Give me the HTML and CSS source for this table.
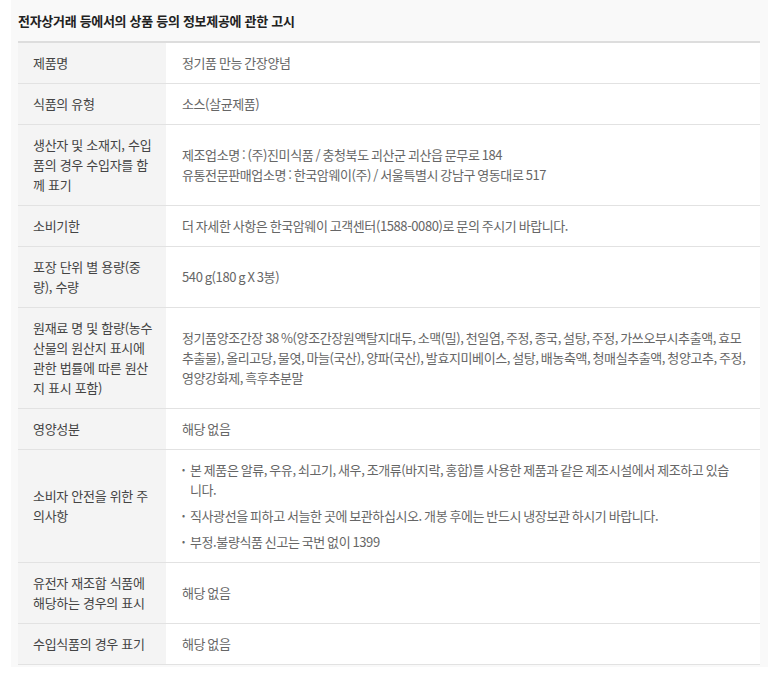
FILE: index.html
```html
<!DOCTYPE html>
<html lang="ko">
<head>
<meta charset="utf-8">
<title>상품정보제공 고시</title>
<link rel="stylesheet" href="styles.css">
</head>
<body>
<div class="panel">
  <h2 class="title">전자상거래 등에서의 상품 등의 정보제공에 관한 고시</h2>
  <table class="info">
    <tbody>
      <tr><th>제품명</th><td>정기품 만능 간장양념</td></tr>
      <tr><th>식품의 유형</th><td>소스(살균제품)</td></tr>
      <tr><th>생산자 및 소재지, 수입품의 경우 수입자를 함께 표기</th><td>제조업소명 : (주)진미식품 / 충청북도 괴산군 괴산읍 문무로 184<br>유통전문판매업소명 : 한국암웨이(주) / 서울특별시 강남구 영동대로 517</td></tr>
      <tr><th>소비기한</th><td>더 자세한 사항은 한국암웨이 고객센터(1588-0080)로 문의 주시기 바랍니다.</td></tr>
      <tr><th>포장 단위 별 용량(중량), 수량</th><td>540 g(180 g X 3봉)</td></tr>
      <tr><th>원재료 명 및 함량(농수산물의 원산지 표시에 관한 법률에 따른 원산지 표시 포함)</th><td>정기품양조간장 38 %(양조간장원액탈지대두, 소맥(밀), 천일염, 주정, 종국, 설탕, 주정, 가쓰오부시추출액, 효모추출물), 올리고당, 물엿, 마늘(국산), 양파(국산), 발효지미베이스, 설탕, 배농축액, 청매실추출액, 청양고추, 주정, 영양강화제, 흑후추분말</td></tr>
      <tr><th>영양성분</th><td>해당 없음</td></tr>
      <tr><th>소비자 안전을 위한 주의사항</th><td>
        <ul class="notes">
          <li>본 제품은 알류, 우유, 쇠고기, 새우, 조개류(바지락, 홍합)를 사용한 제품과 같은 제조시설에서 제조하고 있습니다.</li>
          <li>직사광선을 피하고 서늘한 곳에 보관하십시오. 개봉 후에는 반드시 냉장보관 하시기 바랍니다.</li>
          <li>부정.불량식품 신고는 국번 없이 1399</li>
        </ul>
      </td></tr>
      <tr><th>유전자 재조합 식품에 해당하는 경우의 표시</th><td>해당 없음</td></tr>
      <tr><th>수입식품의 경우 표기</th><td>해당 없음</td></tr>
    </tbody>
  </table>
</div>
</body>
</html>
```

FILE: styles.css
```css
html, body {
  margin: 0;
  padding: 0;
  background: #ffffff;
}
body {
  font-family: "Noto Sans CJK KR", "Noto Sans", sans-serif;
  font-size: 13px;
  line-height: 20px;
  letter-spacing: -0.3px;
  color: #666666;
}
.panel {
  margin: 0 12px 0 11px;
  padding: 0 8px 2px 7px;
  background: #f9f9f9;
}
.title {
  margin: 0;
  padding: 11px 0 10px;
  font-size: 13px;
  line-height: 20px;
  font-weight: 700;
  color: #222222;
}
.info {
  width: 100%;
  border-collapse: collapse;
  border-top: 2px solid #dddddd;
  table-layout: fixed;
}
.info th,
.info td {
  border-bottom: 1px solid #e2e2e2;
  vertical-align: middle;
  text-align: left;
  padding: 10px 9px 10px 16px;
  font-weight: 400;
}
.info th {
  width: 123px;
  padding: 10px 10px 10px 15px;
  background: #f4f4f4;
  color: #444444;
}
.info td {
  background: #ffffff;
  letter-spacing: -0.4px;
  word-spacing: -1px;
}
.notes {
  list-style: none;
  margin: 0;
  padding: 0 14px 0 0;
}
.notes li {
  display: flex;
}
.notes li + li {
  margin-top: 6px;
}
.notes li::before {
  content: "•";
  flex: 0 0 8px;
  font-size: 9px;
  color: #666666;
}
```
